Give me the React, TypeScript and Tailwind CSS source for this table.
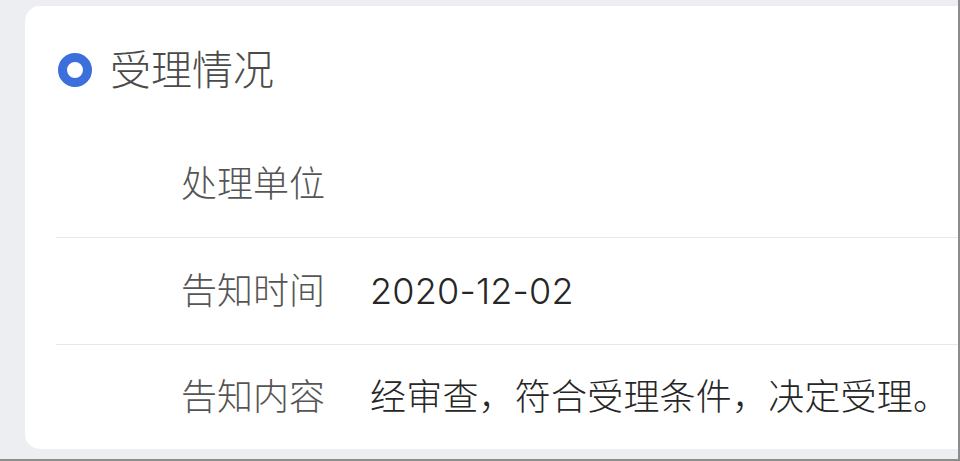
const rows = [
  { label: "处理单位", value: "" },
  { label: "告知时间", value: "2020-12-02" },
  { label: "告知内容", value: "经审查，符合受理条件，决定受理。" },
];

export default function App() {
  return (
    <div
      className="w-[960px] h-[461px] overflow-hidden bg-[#eceef2] border-r-2 border-b-2 border-[#8c8c8c] pt-[6px] pl-[25px]"
      style={{ fontFamily: 'Inter, "Noto Sans CJK SC", sans-serif' }}
    >
      <div className="bg-white rounded-l-[15px] h-[443px] flex flex-col">
        {/* header */}
        <div className="pt-[40px] pb-[37px] pl-[33px]">
          <div className="h-[48px] flex items-center gap-[18px]">
            <span className="w-[34px] h-[34px] rounded-full border-[9px] border-[#3a6fdc]" />
            <span className="text-[41px] leading-none font-light text-[#4a4a4a]">受理情况</span>
          </div>
        </div>

        {/* rows */}
        <div className="ml-[31px] flex flex-col">
          {rows.map((r, i) => (
            <div
              key={r.label}
              className={
                i < rows.length - 1
                  ? "h-[107px] flex items-center border-b border-[#e8e8e8] pl-[125px]"
                  : "h-[104px] flex items-center pl-[125px]"
              }
            >
              <span className="w-[144px] text-[36px] leading-none font-light text-[#555] shrink-0">{r.label}</span>
              <span className="ml-[45px] text-[36px] leading-none font-light text-[#262626] whitespace-nowrap tracking-[0.2px]">
                {r.value}
              </span>
            </div>
          ))}
        </div>
      </div>
    </div>
  );
}
